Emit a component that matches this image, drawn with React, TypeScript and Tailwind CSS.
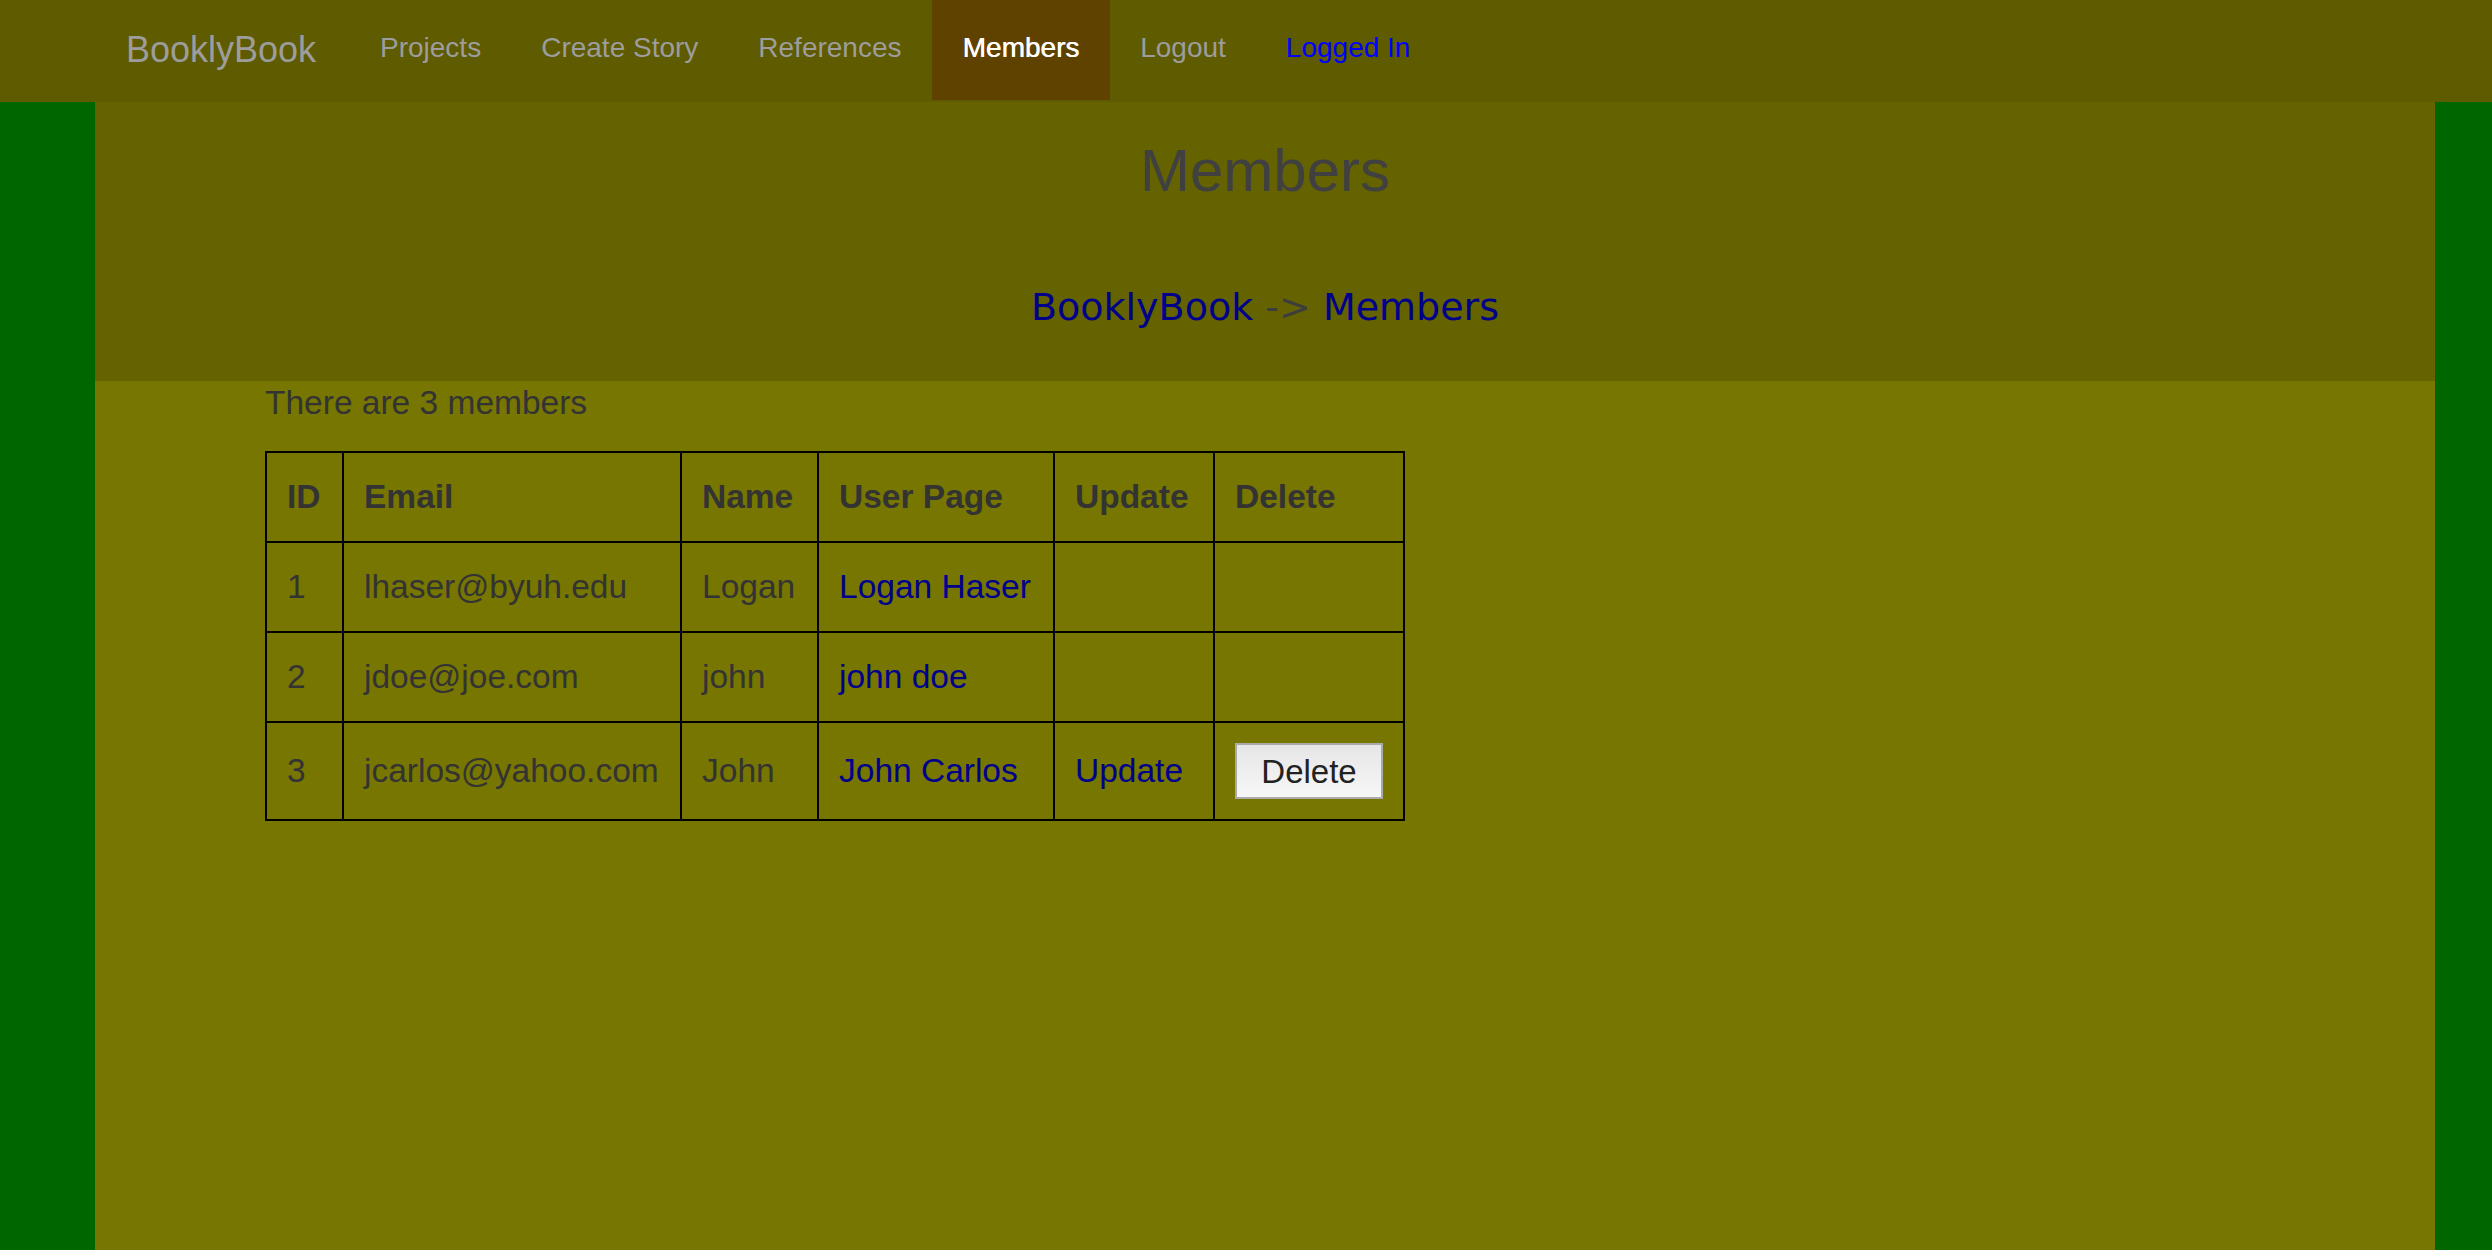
import React from "react";

const members = [
  { id: 1, email: "lhaser@byuh.edu", name: "Logan", page: "Logan Haser", canEdit: false },
  { id: 2, email: "jdoe@joe.com", name: "john", page: "john doe", canEdit: false },
  { id: 3, email: "jcarlos@yahoo.com", name: "John", page: "John Carlos", canEdit: true },
];

export default function App() {
  return (
    <div className="flex h-[1250px] w-[2492px] flex-col overflow-hidden bg-[#006600] font-['Liberation_Sans',Arial,sans-serif]">
      {/* Navbar */}
      <nav className="flex h-[102px] w-full shrink-0 items-start bg-[#5e5b00] pl-[95px] text-[28px] leading-[40px]">
        <a className="block h-[100px] w-[255px] pl-[31px] text-[36px] leading-[100px] text-[#9d9d9d]">BooklyBook</a>
        <a className="block h-[100px] px-[30px] pt-[28px] text-[#9d9d9d]">Projects</a>
        <a className="block h-[100px] px-[30px] pt-[28px] text-[#9d9d9d]">Create Story</a>
        <a className="block h-[100px] px-[30px] pt-[28px] text-[#9d9d9d]">References</a>
        <a className="block h-[100px] bg-[#5f4100] px-[31px] pt-[28px] text-white [text-shadow:0.5px_0_0_#fff]">Members</a>
        <a className="block h-[100px] px-[30px] pt-[28px] text-[#9d9d9d]">Logout</a>
        <a className="block h-[100px] px-[30px] pt-[28px] text-[#0000ff]">Logged In</a>
      </nav>

      {/* Main container */}
      <div className="ml-[95px] flex w-[2340px] flex-1 flex-col bg-[#777600]">
        {/* Jumbotron */}
        <div className="flex h-[279px] shrink-0 flex-col items-center bg-[#646300] pt-[36px]">
          <h1 className="text-[60px] leading-[66px] font-normal text-[#404040]">Members</h1>
          <div className="mt-[81px] font-['DejaVu_Sans',Verdana,sans-serif] text-[38px] leading-[44px]">
            <a className="text-[#00008b]">BooklyBook</a>
            <span className="text-[#3d3d3d]"> -&gt; </span>
            <a className="text-[#00008b]">Members</a>
          </div>
        </div>

        {/* Content */}
        <div className="pl-[170px] text-[33.5px] text-[#333]">
          <p className="mt-[2px] leading-[40px]">There are 3 members</p>
          <table className="mt-[28px] w-[1138px] table-fixed border-collapse border-2 border-black">
            <colgroup>
              <col className="w-[77px]" />
              <col className="w-[338px]" />
              <col className="w-[137px]" />
              <col className="w-[236px]" />
              <col className="w-[160px]" />
              <col className="w-[190px]" />
            </colgroup>
            <thead>
              <tr>
                {["ID", "Email", "Name", "User Page", "Update", "Delete"].map((h) => (
                  <th
                    key={h}
                    className="border-2 border-black px-[20px] py-[20px] text-left align-middle leading-[48px] font-bold whitespace-nowrap"
                  >
                    {h}
                  </th>
                ))}
              </tr>
            </thead>
            <tbody>
              {members.map((m) => (
                <tr key={m.id}>
                  <td className="border-2 border-black px-[20px] py-[20px] align-middle leading-[48px]">{m.id}</td>
                  <td className="border-2 border-black px-[20px] py-[20px] align-middle leading-[48px] whitespace-nowrap">{m.email}</td>
                  <td className="border-2 border-black px-[20px] py-[20px] align-middle leading-[48px]">{m.name}</td>
                  <td className="border-2 border-black px-[20px] py-[20px] align-middle leading-[48px] whitespace-nowrap">
                    <a className="text-[#00008b]">{m.page}</a>
                  </td>
                  <td className="border-2 border-black px-[20px] py-[20px] align-middle leading-[48px]">
                    {m.canEdit && <a className="text-[#00008b]">Update</a>}
                  </td>
                  <td className="border-2 border-black px-[20px] py-[20px] align-middle leading-[48px]">
                    {m.canEdit && (
                      <button className="flex h-[56px] w-[148px] items-center justify-center border-2 border-[#aaaaaa] bg-gradient-to-b from-[#e6e6e6] to-[#f7f7f7] text-[33px] leading-none text-[#222]">
                        Delete
                      </button>
                    )}
                  </td>
                </tr>
              ))}
            </tbody>
          </table>
        </div>
      </div>
    </div>
  );
}
